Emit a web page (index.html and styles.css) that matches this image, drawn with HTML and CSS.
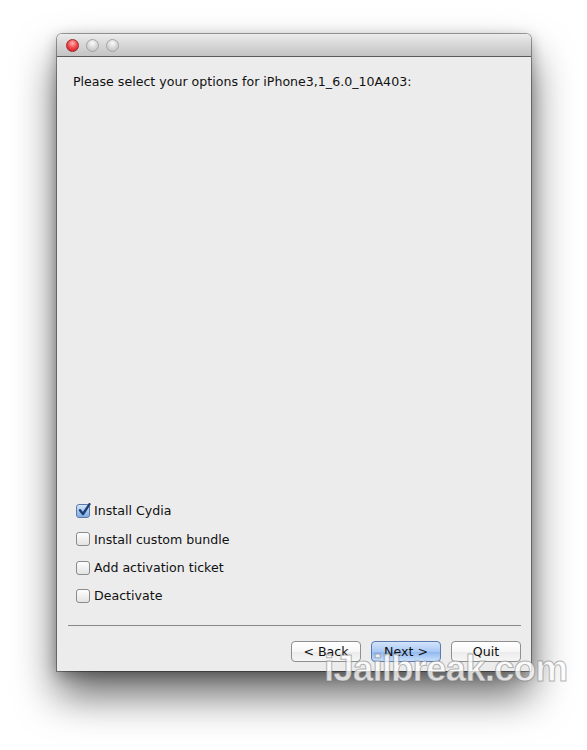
FILE: index.html
```html
<!DOCTYPE html>
<html lang="en">
  <head>
    <meta charset="UTF-8" />
    <meta name="viewport" content="width=device-width, initial-scale=1.0" />
    <title>Redsn0w Options</title>
    <link rel="stylesheet" href="styles.css">
  </head>
  <body>
    <div class="stage">
      <div class="window">
        <div class="titlebar">
          <span class="light red"></span>
          <span class="light"></span>
          <span class="light"></span>
        </div>
        <div class="content">
          <p class="heading">Please select your options for iPhone3,1_6.0_10A403:</p>
          <div class="spacer"></div>
          <div class="options">
            <label class="option"><span class="box checked"><svg width="14" height="14" viewBox="0 0 14 14"><path d="M3 7.2 L6 11 L12.5 1.2" fill="none" stroke="#1d3f73" stroke-width="2.4" stroke-linejoin="round" stroke-linecap="round"/></svg></span>Install Cydia</label>
            <label class="option"><span class="box"></span>Install custom bundle</label>
            <label class="option"><span class="box"></span>Add activation ticket</label>
            <label class="option"><span class="box"></span>Deactivate</label>
          </div>
          <div class="separator"></div>
          <div class="buttons">
            <button class="btn">&lt; Back</button>
            <button class="btn primary">Next &gt;</button>
            <button class="btn">Quit</button>
          </div>
        </div>
      </div>
      <div class="watermark" aria-hidden="true">iJailbreak.com</div>
    </div>
  </body>
</html>
```
FILE: styles.css
```css
body {
  margin: 0;
  background: #fff;
  font-family: "DejaVu Sans", "Liberation Sans", sans-serif;
}
.stage {
  position: relative;
  width: 587px;
  height: 750px;
  padding: 34px 0 0 57px;
  box-sizing: border-box;
}
.window {
  width: 474px;
  height: 637px;
  display: flex;
  flex-direction: column;
  border-radius: 5px 5px 0 0;
  box-shadow: 0 0 0 1px rgba(0, 0, 0, 0.35), 0 24px 42px rgba(0, 0, 0, 0.6), 0 4px 14px rgba(0, 0, 0, 0.3);
}
.titlebar {
  height: 22px;
  display: flex;
  align-items: center;
  gap: 7px;
  padding-left: 9px;
  border-radius: 5px 5px 0 0;
  background: linear-gradient(#ececec, #d6d6d6 50%, #c4c4c4);
  border-bottom: 1px solid #5c5c5c;
}
.light {
  width: 13px;
  height: 13px;
  border-radius: 50%;
  box-sizing: border-box;
  border: 1px solid #a4a4a4;
  background: radial-gradient(circle at 50% 30%, #fafafa, #d4d4d4 55%, #bbb);
}
.light.red {
  border-color: #a2242a;
  background: radial-gradient(circle at 50% 30%, #ffb3b3, #f0464a 50%, #c81820);
}
.content {
  flex: 1;
  display: flex;
  flex-direction: column;
  background: #ececec;
  padding: 0 10px 9px 11px;
}
.heading {
  margin: 17px 0 0 5px;
  font-size: 12.6px;
  color: #111;
}
.spacer {
  flex: 1;
}
.options {
  display: flex;
  flex-direction: column;
  padding-left: 8px;
}
.option {
  height: 28.3px;
  display: flex;
  align-items: center;
  gap: 4px;
  font-size: 12.6px;
  color: #111;
}
.box {
  width: 14px;
  height: 14px;
  box-sizing: border-box;
  border: 1px solid #8a8a8a;
  border-radius: 3px;
  background: linear-gradient(#fff, #f0f0f0 50%, #e4e4e4);
  position: relative;
}
.box.checked {
  border-color: #5d79a8;
  background: linear-gradient(#d6e6fa, #a6c6ef 50%, #7fabe4);
}
.box svg {
  position: absolute;
  left: 0;
  top: -2px;
}
.separator {
  margin-top: 15px;
  height: 1px;
  background: #888;
}
.buttons {
  margin-top: 15px;
  display: flex;
  justify-content: flex-end;
  gap: 10px;
}
.btn {
  width: 70px;
  height: 21px;
  padding: 0;
  font-family: inherit;
  font-size: 12.6px;
  color: #111;
  border: 1px solid #8f8f8f;
  border-radius: 4px;
  background: linear-gradient(#ffffff, #f7f7f7 50%, #ebebeb 51%, #f6f6f6);
}
.btn.primary {
  border-color: #5a7ab1;
  background: linear-gradient(#d3e3fb, #a9c9f4 50%, #8db6ef 51%, #c9e0fb);
}
.watermark {
  position: absolute;
  left: 324px;
  top: 648px;
  font-family: "Liberation Sans", sans-serif;
  font-weight: bold;
  font-size: 37px;
  letter-spacing: -1px;
  color: rgba(255, 255, 255, 0.75);
  -webkit-text-stroke: 1px rgba(110, 110, 110, 0.5);
  pointer-events: none;
}
```
